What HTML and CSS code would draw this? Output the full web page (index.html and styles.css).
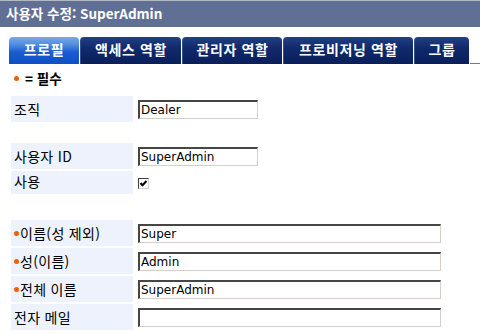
FILE: index.html
```html
<!DOCTYPE html>
<html lang="ko">
<head>
<meta charset="utf-8">
<link rel="stylesheet" href="styles.css">
</head>
<body>
<div class="header">사용자 수정: SuperAdmin</div>
<div class="tabs">
  <div class="tab active" style="width:70px">프로필</div>
  <div class="tab" style="width:101px">액세스 역할</div>
  <div class="tab" style="width:100px">관리자 역할</div>
  <div class="tab" style="width:130px">프로비저닝 역할</div>
  <div class="tab" style="width:55px">그룹</div>
  <div class="tabfill"></div>
</div>
<div class="required"><span class="dot"></span>= 필수</div>
<div class="form">
  <div class="row"><div class="label">조직</div><div class="field"><div class="input short">Dealer</div></div></div>
  <div class="spacer"></div>
  <div class="row"><div class="label">사용자 ID</div><div class="field"><div class="input short">SuperAdmin</div></div></div>
  <div class="row small"><div class="label">사용</div><div class="field"><div class="check"><svg width="9" height="9" viewBox="0 0 9 9"><path d="M1.5 4 L3.5 6.3 L7.5 2" fill="none" stroke="#000" stroke-width="2"/></svg></div></div></div>
  <div class="spacer2"></div>
  <div class="row"><div class="label"><span class="dot"></span>이름(성 제외)</div><div class="field"><div class="input long">Super</div></div></div>
  <div class="row"><div class="label"><span class="dot"></span>성(이름)</div><div class="field"><div class="input long">Admin</div></div></div>
  <div class="row"><div class="label"><span class="dot"></span>전체 이름</div><div class="field"><div class="input long">SuperAdmin</div></div></div>
  <div class="row"><div class="label">전자 메일</div><div class="field"><div class="input long"></div></div></div>
</div>
</body>
</html>
```

FILE: styles.css
```css
html, body { margin: 0; padding: 0; background: #fff; }
body {
  font-family: "Noto Sans CJK KR", "DejaVu Sans", sans-serif;
  font-size: 14px;
  color: #000;
  width: 480px;
  height: 334px;
  overflow: hidden;
}
.header {
  border-top: 1px solid #b4b8c2;
  background: #5f7094;
  color: #fff;
  font-weight: bold;
  font-size: 13.5px;
  height: 26px;
  line-height: 25px;
  padding-left: 6px;
}
.tabs {
  display: flex;
  margin-top: 10px;
  padding-left: 9px;
  height: 27px;
}
.tab {
  box-sizing: border-box;
  height: 27px;
  margin-right: 1px;
  border-radius: 4px 4px 0 0;
  background: linear-gradient(#243f86 0%, #102a6c 40%, #0a1f5a 100%);
  color: #fff;
  font-weight: bold;
  font-size: 14px;
  letter-spacing: 0.6px;
  text-align: center;
  line-height: 24px;
  border-left: 1px solid #3a4c86;
  white-space: nowrap;
}
.tab.active {
  background: linear-gradient(#7aaae6 0%, #4e8ae0 30%, #1c5cd2 55%, #0e4ec6 100%);
  border-left: none;
}
.tabfill {
  flex: 1;
  border-bottom: 1px solid #6676b6;
  height: 26px;
}
.required {
  margin: 6px 0 0 14px;
  height: 16px;
  line-height: 16px;
  font-weight: bold;
  font-size: 13.5px;
  display: flex;
  align-items: center;
}
.dot {
  display: inline-block;
  width: 5px;
  height: 5px;
  border-radius: 50%;
  background: #f25c05;
  vertical-align: 3px;
  margin-right: 1px;
}
.required .dot { margin-right: 6px; }
.form {
  margin: 10px 0 0 11px;
  display: flex;
  flex-direction: column;
  gap: 2px;
}
.row {
  display: flex;
  height: 26px;
}
.row.small { height: 23px; }
.label {
  box-sizing: border-box;
  width: 122px;
  background: #eef2fd;
  padding-left: 3px;
  line-height: 26px;
  white-space: nowrap;
  letter-spacing: 0.3px;
}
.row.small .label { line-height: 20px; }
.field {
  padding-left: 5px;
  display: flex;
  align-items: center;
}
.row.small .field { align-items: flex-start; padding-top: 7px; }
.input {
  box-sizing: border-box;
  height: 19px;
  border-top: 2px solid #454545;
  border-left: 2px solid #454545;
  border-bottom: 1px solid #d4d0c8;
  border-right: 1px solid #d4d0c8;
  font-family: "DejaVu Sans", sans-serif;
  font-size: 12px;
  line-height: 16px;
  padding-left: 1px;
  background: #fff;
  letter-spacing: 0;
}
.input.short { width: 120px; }
.input.long { width: 303px; }
.check {
  box-sizing: border-box;
  width: 11px;
  height: 11px;
  border-top: 1px solid #404040;
  border-left: 1px solid #404040;
  border-bottom: 1px solid #d4d0c8;
  border-right: 1px solid #d4d0c8;
  display: flex;
  align-items: center;
  justify-content: center;
}
.check svg { display: block; }
.spacer { height: 17px; }
.spacer2 { height: 22px; }
```
